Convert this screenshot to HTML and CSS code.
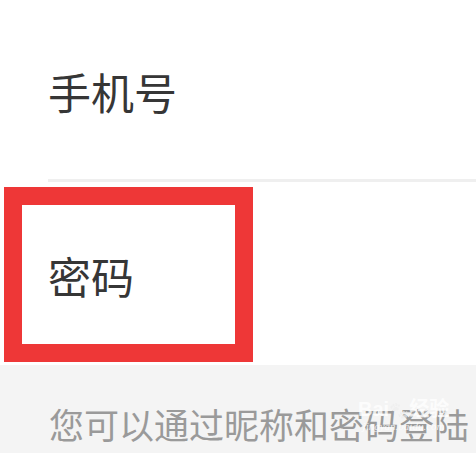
FILE: index.html
```html
<!DOCTYPE html>
<html lang="zh-CN">
<head>
    <meta charset="UTF-8">
    <meta name="viewport" content="width=device-width, initial-scale=1.0">
    <title>登录</title>
    <link rel="stylesheet" href="styles.css">
</head>
<body>
    <div class="form">
        <div class="row">
            <div class="field">手机号</div>
        </div>
        <div class="row">
            <div class="field last">密码</div>
        </div>
        <div class="mark"></div>
    </div>
    <div class="tip">
        <span>您可以通过昵称和密码登陆</span>
        <div class="watermark">
            <span class="wm-logo">Bai<b>🐾</b>经验</span>
            <span class="wm-url">jingyan.baidu.com</span>
        </div>
    </div>
</body>
</html>
```

FILE: styles.css
```css
body {
    margin: 0;
    background-color: #fff;
    font-family: "Noto Sans CJK SC", "Noto Sans", sans-serif;
    overflow: hidden;
}
.form {
    position: relative;
    background-color: #fff;
}
.row {
    padding-left: 48px;
}
.field {
    height: 182px;
    display: flex;
    align-items: center;
    font-size: 43px;
    color: #363636;
    border-bottom: 3px solid #efefef;
    padding-top: 2px;
    box-sizing: border-box;
}
.field.last {
    height: 183px;
    border-bottom: none;
}
/* 红框标注 */
.mark {
    position: absolute;
    left: 4px;
    top: 187px;
    width: 249px;
    height: 175px;
    border: 18px solid #ee3737;
    box-sizing: border-box;
}
.tip {
    position: relative;
    height: 88px;
    background-color: #f4f4f4;
    padding-left: 49px;
    display: flex;
    align-items: center;
    padding-top: 28px;
    box-sizing: border-box;
    font-size: 35px;
    color: #9a9a9a;
}
.watermark {
    position: absolute;
    left: 358px;
    top: 34px;
    display: flex;
    flex-direction: column;
    align-items: center;
    color: rgba(255, 255, 255, 0.8);
    line-height: 1;
}
.wm-logo {
    font-family: "Liberation Sans", "Noto Sans CJK SC", sans-serif;
    font-size: 20px;
    font-weight: bold;
}
.wm-logo b {
    font-size: 16px;
    filter: grayscale(1) brightness(2.5);
    opacity: 0.8;
}
.wm-url {
    font-family: "Liberation Serif", serif;
    font-style: italic;
    font-size: 11px;
    margin-top: 2px;
}
```
